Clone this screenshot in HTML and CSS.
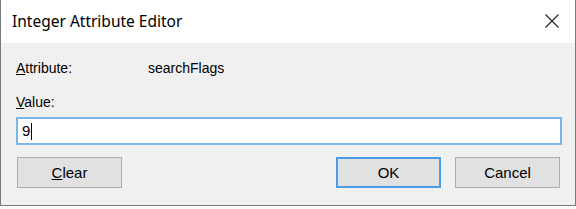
FILE: index.html
```html
<!DOCTYPE html>
<html lang="en">
<head>
  <meta charset="UTF-8">
  <title>Integer Attribute Editor</title>
  <link rel="stylesheet" href="styles.css">
</head>
<body>
  <div class="window">
    <div class="titlebar">
      <span class="title">Integer Attribute Editor</span>
      <span class="close">
        <svg width="14" height="14" viewBox="0 0 14 14">
          <path d="M0.5 0.5 L13.5 13.5 M13.5 0.5 L0.5 13.5" stroke="#222" stroke-width="1.1" fill="none"/>
        </svg>
      </span>
    </div>

    <div class="content">
      <div class="attr-row">
        <span class="label"><u>A</u>ttribute:</span>
        <span class="attr-value">searchFlags</span>
      </div>

      <div class="value-label"><u>V</u>alue:</div>
      <div class="input">9<span class="caret"></span></div>

      <div class="buttons">
        <button class="btn"><u>C</u>lear</button>
        <span class="spacer"></span>
        <button class="btn btn-default">OK</button>
        <button class="btn">Cancel</button>
      </div>
    </div>
  </div>
</body>
</html>
```

FILE: styles.css
```css
body {
  margin: 0;
  background-color: #fafafa;
  font-family: "Liberation Sans", Arial, sans-serif;
}
.window {
  width: 574px;
  height: 205px;
  border-left: 1px solid #7a7a7a;
  border-right: 1px solid #7a7a7a;
  border-bottom: 1px solid #7a7a7a;
  display: flex;
  flex-direction: column;
}
.titlebar {
  height: 43px;
  background-color: #fff;
  display: flex;
  align-items: center;
  padding-left: 11px;
}
.title {
  font-family: "Noto Sans", sans-serif;
  font-size: 15.5px;
  color: #000;
  margin-top: -1px;
}
.close {
  margin-left: auto;
  margin-right: 16px;
  margin-top: -1px;
  display: flex;
}
.content {
  flex: 1;
  background-color: #f0f0f0;
  padding: 17px 13px 0 15px;
  font-size: 14px;
  color: #000;
}
.attr-row {
  display: flex;
  line-height: 16px;
}
.label {
  width: 132px;
}
.value-label {
  margin-top: 18px;
  line-height: 16px;
}
.input {
  margin-top: 7px;
  height: 24px;
  border: 2px solid #7cb5ea;
  background-color: #fff;
  font-size: 15px;
  line-height: 24px;
  padding-left: 4px;
  display: flex;
  align-items: center;
}
.caret {
  display: inline-block;
  width: 1px;
  height: 17px;
  background-color: #000;
  margin-left: 1px;
}
.buttons {
  display: flex;
  margin-top: 12px;
  padding-left: 1px;
  padding-right: 2px;
  gap: 14px;
}
.spacer {
  flex: 1;
}
.btn {
  width: 105px;
  height: 31px;
  background-color: #e1e1e1;
  border: 1px solid #adadad;
  font-family: "Liberation Sans", Arial, sans-serif;
  font-size: 15px;
  color: #000;
  padding: 0;
}
.btn-default {
  border: 2px solid #4a9de4;
}
```
